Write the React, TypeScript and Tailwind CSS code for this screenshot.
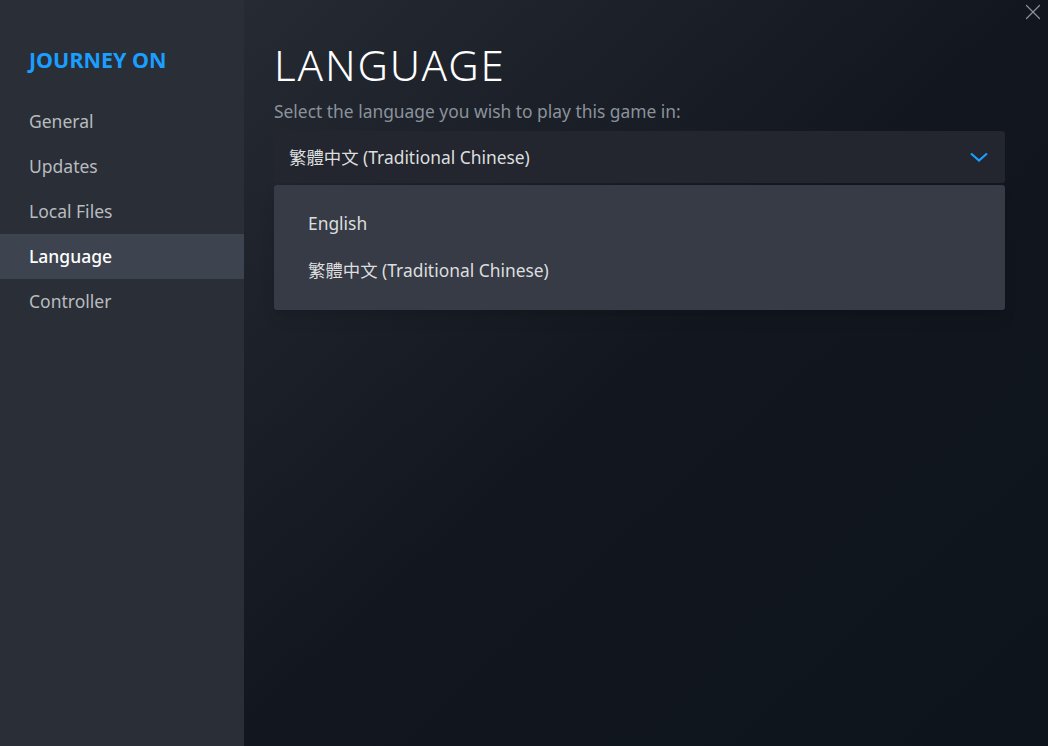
import { X } from "lucide-react"

const navItems = ["General", "Updates", "Local Files", "Language", "Controller"]
const languages = ["English", "繁體中文 (Traditional Chinese)"]

const font = { fontFamily: '"Noto Sans", "Noto Sans CJK TC", sans-serif' }

export default function App() {
  const active = "Language"
  const selected = "繁體中文 (Traditional Chinese)"

  return (
    <div
      className="flex h-[746px] w-[1048px] overflow-hidden bg-[#0e141b] text-[#dcdedf]"
      style={font}
    >
      {/* sidebar */}
      <aside className="flex w-[244px] shrink-0 flex-col bg-[#2a2e37] pt-[44px]">
        <div className="px-[29px] text-[21.5px] font-bold leading-[32px] text-[#1a9fff]">
          JOURNEY ON
        </div>
        <nav className="mt-[23px] flex flex-col">
          {navItems.map((item) => (
            <div
              key={item}
              className={
                item === active
                  ? "flex h-[45px] items-center bg-[#3d4450] px-[29px] text-[17.5px] font-medium text-white"
                  : "flex h-[45px] items-center px-[29px] text-[17.5px] text-[#b8bcbf]"
              }
            >
              {item}
            </div>
          ))}
        </nav>
      </aside>

      {/* main */}
      <main className="relative flex flex-1 flex-col bg-gradient-to-br from-[#252a33] via-[#12171f] to-[#0e141b] pl-[30px] pr-[43px] pt-[37px]">
        <button className="absolute right-[2px] top-[-1px] text-[#8b929a]">
          <X className="h-[26px] w-[26px]" strokeWidth={1.1} />
        </button>

        <h1 className="text-[42px] font-light leading-[56px] tracking-[0.045em] text-white">
          LANGUAGE
        </h1>
        <p className="mt-[7px] text-[17.4px] leading-[22px] text-[#8b929a]">
          Select the language you wish to play this game in:
        </p>

        <div className="mt-[9px] flex h-[52px] items-center justify-between rounded-[3px] bg-[#23262e] pl-[15px] pr-[17px] text-[17.4px]">
          <span>{selected}</span>
          <svg width="18" height="10" viewBox="0 0 18 10" fill="none">
            <path d="M1 1.5 L9 8.5 L17 1.5" stroke="#1a9fff" strokeWidth="2.2" />
          </svg>
        </div>

        <div className="mt-[2px] flex flex-col rounded-[3px] bg-[#373b45] pb-[16px] pt-[15px] pl-[34px] shadow-lg">
          {languages.map((lang) => (
            <div key={lang} className="flex h-[47px] items-center text-[17.4px] text-[#dcdedf]">
              {lang}
            </div>
          ))}
        </div>
      </main>
    </div>
  )
}
